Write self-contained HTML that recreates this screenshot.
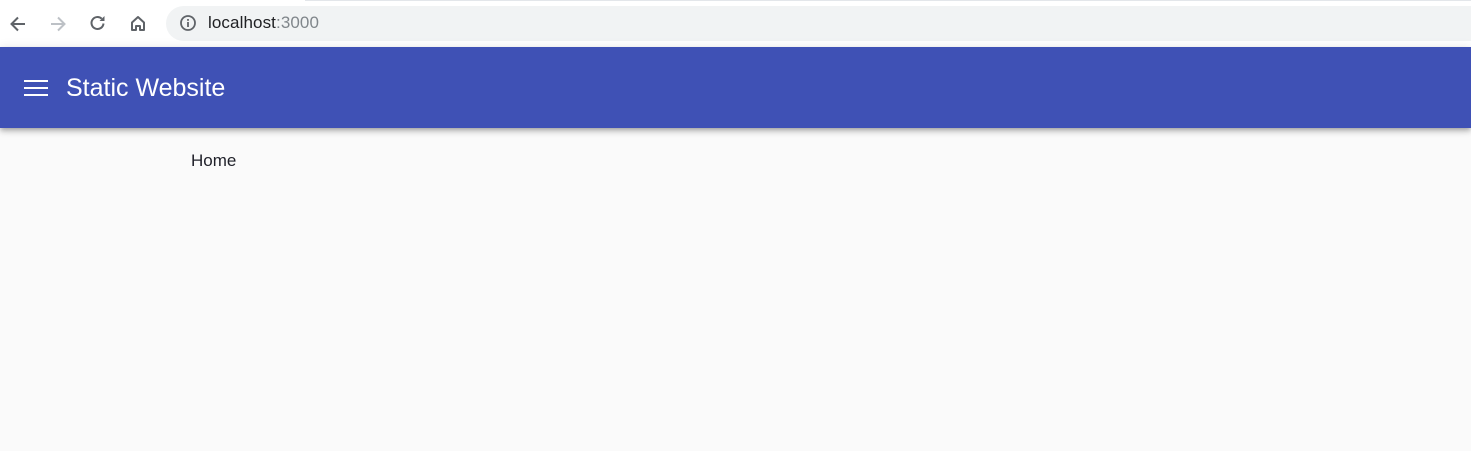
<!DOCTYPE html>
<html><head><meta charset="utf-8"><style>
html,body{margin:0;padding:0;width:1471px;height:451px;overflow:hidden;background:#fafafa;font-family:"Liberation Sans",sans-serif}
.chrome{position:absolute;left:0;top:0;width:1471px;height:47px;background:#fff}
.topline{position:absolute;left:305px;top:0;right:0;height:1px;background:#e3e6ea}
.omni{position:absolute;left:166px;top:6px;right:0;height:35px;background:#f1f3f4;border-radius:18px 0 0 18px}
.url{position:absolute;left:208px;top:13px;font-size:17px;color:#202124;letter-spacing:0.1px}
.url span{color:#80868b}
svg{position:absolute}
.bar{position:absolute;left:0;top:47px;width:1471px;height:81px;background:#3f51b5;box-shadow:0 2px 4px -1px rgba(0,0,0,.2),0 4px 5px 0 rgba(0,0,0,.14),0 1px 10px 0 rgba(0,0,0,.12)}
.title{position:absolute;left:66px;top:27px;color:#fff;font-size:25px;line-height:29px}
.home{position:absolute;left:191px;top:151px;font-size:17px;color:#1f2029}
</style></head><body>
<div class="chrome">
<div class="topline"></div>
<svg style="left:8px;top:14px" width="20" height="20" viewBox="0 0 20 20"><path d="M17 10H4M10 3.5L3.5 10 10 16.5" stroke="#5f6368" stroke-width="2" fill="none"/></svg>
<svg style="left:48px;top:14px" width="20" height="20" viewBox="0 0 20 20"><path d="M3 10h13M10 3.5l6.5 6.5-6.5 6.5" stroke="#bdc1c6" stroke-width="2" fill="none"/></svg>
<svg style="left:88px;top:13px" width="20" height="20" viewBox="0 0 20 20"><path d="M15.5 10.5a6 6 0 1 1-1.8-4.8" stroke="#5f6368" stroke-width="2" fill="none"/><path d="M16.5 3v5h-5z" fill="#5f6368"/></svg>
<svg style="left:128px;top:13px" width="20" height="20" viewBox="0 0 20 20"><path d="M4 9.5L10 4l6 5.5V17h-4v-4H8v4H4z" stroke="#5f6368" stroke-width="2" fill="none" stroke-linejoin="round"/></svg>
<div class="omni"></div>
<svg style="left:179px;top:14px" width="18" height="18" viewBox="0 0 18 18"><circle cx="9" cy="9" r="7" stroke="#5f6368" stroke-width="1.8" fill="none"/><rect x="8.1" y="8" width="1.8" height="5" fill="#5f6368"/><rect x="8.1" y="5" width="1.8" height="1.8" fill="#5f6368"/></svg>
<div class="url">localhost<span>:3000</span></div>
</div>
<div class="bar">
<svg style="left:24px;top:32px" width="24" height="18" viewBox="0 0 24 18"><rect x="0" y="1" width="24" height="2" fill="#fff"/><rect x="0" y="8" width="24" height="2" fill="#fff"/><rect x="0" y="15" width="24" height="2" fill="#fff"/></svg>
<div class="title">Static Website</div>
</div>
<div class="home">Home</div>
</body></html>
